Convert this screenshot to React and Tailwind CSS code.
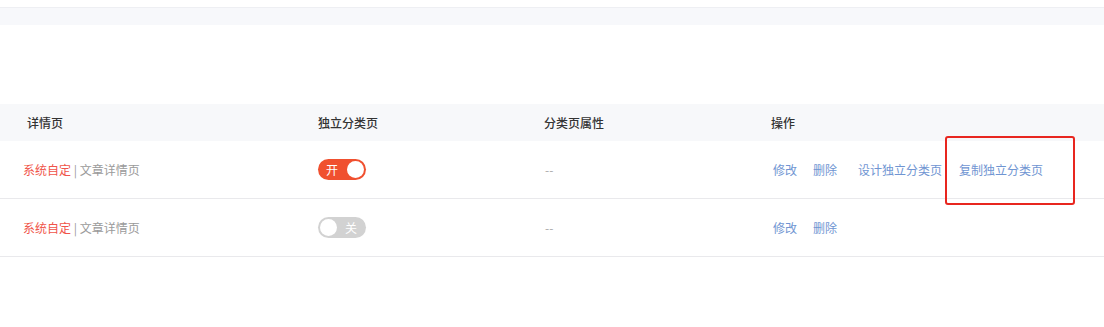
import React, { useState } from "react";

const rows = [
  { id: 1, on: true, ops: ["修改", "删除", "设计独立分类页", "复制独立分类页"] },
  { id: 2, on: false, ops: ["修改", "删除"] },
];

const gaps = ["mr-[16px]", "mr-[21px]", "mr-[17px]", ""];

function Toggle({ on, onChange }) {
  return (
    <button
      onClick={onChange}
      className={`relative flex items-center w-[48px] h-[21px] rounded-full ${
        on ? "bg-[#f0502f]" : "bg-[#d2d2d2]"
      }`}
    >
      <span
        className={`absolute top-[2px] w-[17px] h-[17px] rounded-full bg-white ${
          on ? "right-[2px]" : "left-[2px]"
        }`}
      />
      <span
        className={`absolute text-[12px] leading-none text-white ${
          on ? "left-[8px]" : "right-[9px]"
        }`}
      >
        {on ? "开" : "关"}
      </span>
    </button>
  );
}

export default function App() {
  const [state, setState] = useState(rows.map(r => r.on));

  return (
    <div
      className="w-[1104px] h-[327px] bg-white text-[12px] overflow-hidden"
      style={{ fontFamily: '"Noto Sans CJK SC", "Noto Sans", sans-serif' }}
    >
      {/* top strip */}
      <div className="h-[7px]" />
      <div className="h-[18px] bg-[#f7f8fb] border-t border-[#eeeff3]" />
      <div className="h-[79px]" />

      {/* table */}
      <div>
        <div className="flex items-center h-[37px] bg-[#f7f8fa] text-[#333] font-medium">
          <div className="w-[318px] pl-[27px]">详情页</div>
          <div className="w-[226px]">独立分类页</div>
          <div className="w-[227px]">分类页属性</div>
          <div className="flex-1">操作</div>
        </div>

        {rows.map((row, i) => (
          <div
            key={row.id}
            className="flex items-center h-[58px] border-b border-[#e9e9ec]"
          >
            <div className="w-[318px] pl-[23px]">
              <span className="text-[#f0544a]">系统自定</span>
              <span className="text-[#9a9a9a]"> | 文章详情页</span>
            </div>
            <div className="w-[226px] flex">
              <Toggle
                on={state[i]}
                onChange={() =>
                  setState(prev => prev.map((v, j) => (j === i ? !v : v)))
                }
              />
            </div>
            <div className="w-[227px] text-[#aaa] pl-[1px]">--</div>
            <div className="flex-1 flex items-center pl-[2px] text-[#7095d2]">
              {row.ops.map((op, k) =>
                k === 3 ? (
                  <div key={op} className="relative">
                    <span>{op}</span>
                    <div className="absolute left-[-14px] top-[-25px] w-[130px] h-[69px] border-2 border-[#e8261f] rounded-[3px]" />
                  </div>
                ) : (
                  <span key={op} className={gaps[k]}>
                    {op}
                  </span>
                )
              )}
            </div>
          </div>
        ))}
      </div>
    </div>
  );
}
